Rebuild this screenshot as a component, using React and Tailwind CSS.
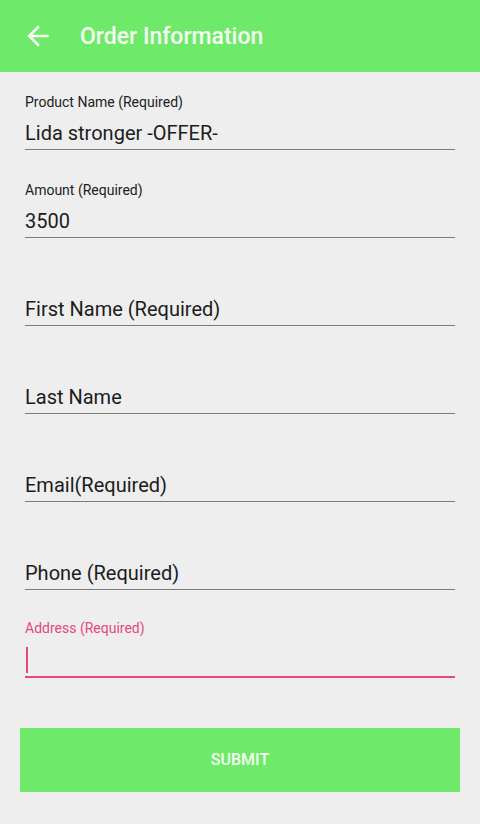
import React from 'react';

const Field = ({ label, value, hint, first }) => (
    <div className={`${first ? 'h-[78px]' : 'h-[88px]'} flex flex-col justify-end`}>
        {label && <p className="text-[14px] leading-[16px] text-[#212121] mb-[11px]">{label}</p>}
        {value ? (
            <p className="text-[20px] leading-[24px] text-[#1c1c1c] mb-[4px]">{value}</p>
        ) : (
            <p className="text-[20px] leading-[24px] text-[#1c1c1c] mb-[4px]">{hint}</p>
        )}
        <div className="h-px bg-[#7a7a7a]" />
    </div>
);

const App = () => {
    return (
        <div className="min-h-[824px] bg-[#eeeeee] font-['Roboto',sans-serif]">
            {/* Toolbar */}
            <div className="h-[72px] bg-[#6fe96a] flex items-center pl-[22px]">
                <svg width="32" height="32" viewBox="0 0 24 24" fill="#f4fff2">
                    <path d="M20 11H7.83l5.59-5.59L12 4l-8 8 8 8 1.41-1.41L7.83 13H20v-2z" />
                </svg>
                <h1 className="ml-[26px] mt-[2px] text-[23px] font-medium text-[#f4fff2]">Order Information</h1>
            </div>

            <div className="px-[25px]">
                <Field first label="Product Name (Required)" value="Lida stronger -OFFER-" />
                <Field label="Amount (Required)" value="3500" />
                <Field hint="First Name (Required)" />
                <Field hint="Last Name" />
                <Field hint="Email(Required)" />
                <Field hint="Phone (Required)" />

                {/* Focused field */}
                <div className="h-[88px] flex flex-col justify-end">
                    <p className="text-[14px] leading-[16px] text-[#e5487e] mb-[11px]">Address (Required)</p>
                    <div className="h-[26px] w-[2px] ml-px bg-[#e5487e] mb-[3px]" />
                    <div className="h-[2px] bg-[#e5487e]" />
                </div>
            </div>

            <div className="mx-[20px] mt-[50px] h-[64px] bg-[#6fe96a] flex items-center justify-center">
                <span className="text-[16px] font-medium text-[#f4fff2]">SUBMIT</span>
            </div>
        </div>
    );
};

export default App;
